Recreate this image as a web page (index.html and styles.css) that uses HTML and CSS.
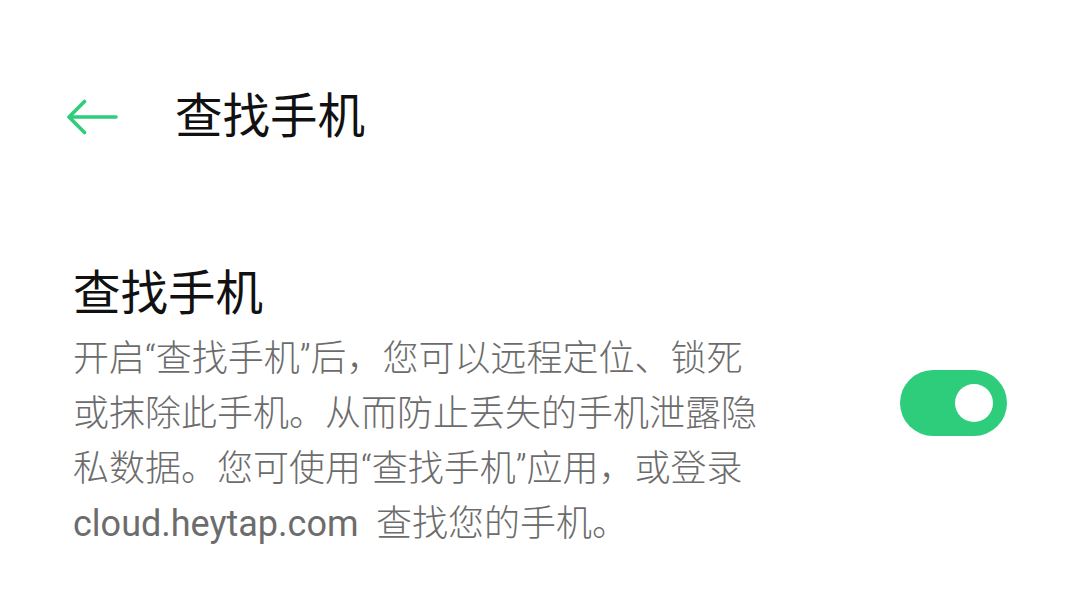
FILE: index.html
```html
<!DOCTYPE html>
<html lang="zh-CN">
<head>
<meta charset="utf-8">
<link rel="stylesheet" href="styles.css">
</head>
<body>
<div class="page">
  <header class="header">
    <svg class="back" width="52" height="40" viewBox="0 0 52 40">
      <path d="M2 20 H49 M2 20 L17.5 4.5 M2 20 L17.5 35.5" fill="none" stroke="#2ecd7c" stroke-width="3.6" stroke-linecap="round" stroke-linejoin="round"/>
    </svg>
    <h1 class="title">查找手机</h1>
  </header>
  <section class="row">
    <div class="text">
      <div class="item-title">查找手机</div>
      <div class="desc">
        <div class="line">开启“查找手机”后，您可以远程定位、锁死</div>
        <div class="line">或抹除此手机。从而防止丢失的手机泄露隐</div>
        <div class="line">私数据。您可使用“查找手机”应用，或登录</div>
        <div class="line"><span class="latin">cloud.heytap.com</span>&nbsp; 查找您的手机。</div>
      </div>
    </div>
    <div class="toggle"><div class="knob"></div></div>
  </section>
</div>
</body>
</html>
```

FILE: styles.css
```css
html, body {
  margin: 0;
  padding: 0;
  background: #ffffff;
}
.page {
  width: 1080px;
  height: 612px;
  font-family: Roboto, "Noto Sans CJK SC", sans-serif;
  overflow: hidden;
}
.header {
  display: flex;
  align-items: center;
  height: 50px;
  margin-top: 92px;
  padding-left: 67px;
}
.back {
  display: block;
  flex: none;
}
.title {
  margin: 0 0 0 56px;
  font-size: 47.5px;
  font-weight: 400;
  line-height: 50px;
  color: #111111;
}
.row {
  display: flex;
  justify-content: space-between;
  align-items: flex-start;
  padding: 0 73px;
  margin-top: 124px;
}
.item-title {
  font-size: 47.5px;
  line-height: 56px;
  color: #111111;
}
.desc {
  margin-top: 10px;
  font-size: 36px;
  font-weight: 300;
  line-height: 55px;
  color: #6c6c6c;
}
.latin {
  font-weight: 400;
}
.line {
  white-space: nowrap;
}
.toggle {
  width: 107px;
  height: 66px;
  border-radius: 33px;
  background: #2ecd7c;
  margin-top: 104px;
  display: flex;
  align-items: center;
  justify-content: flex-end;
  padding-right: 14px;
  box-sizing: border-box;
}
.knob {
  width: 38px;
  height: 38px;
  border-radius: 50%;
  background: #ffffff;
}
```
